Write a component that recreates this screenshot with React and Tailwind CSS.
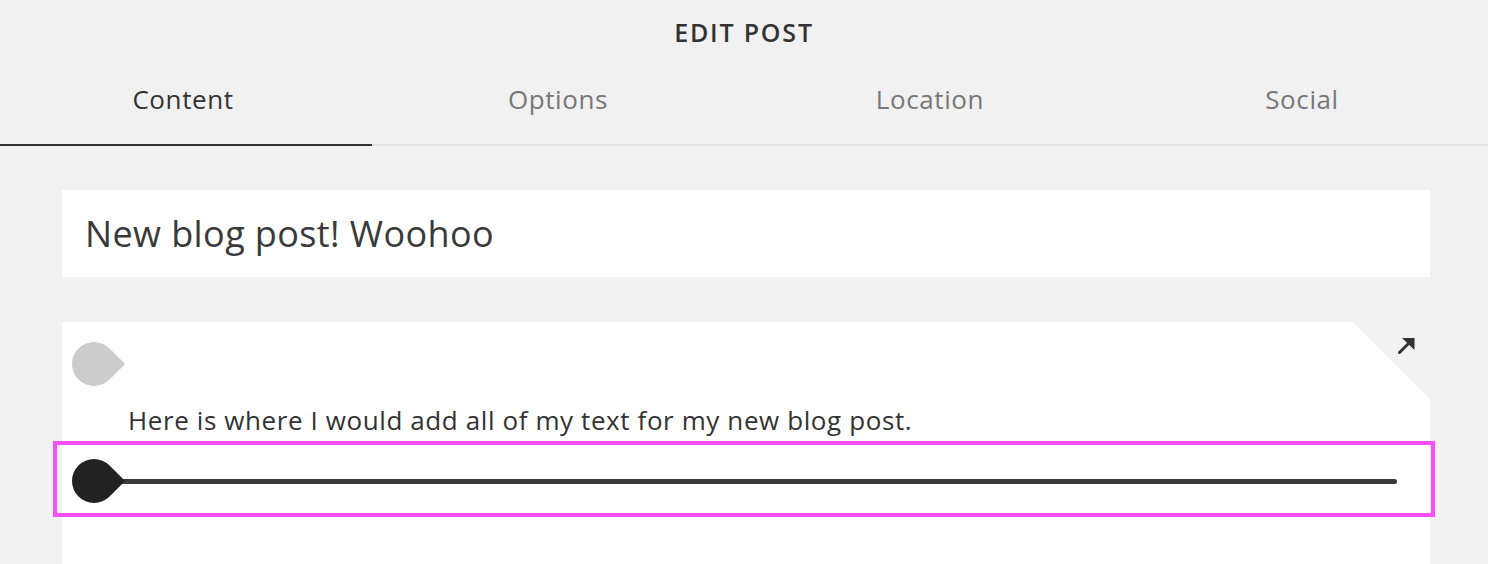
export default function App() {
  const tabs = ["Content", "Options", "Location", "Social"];
  return (
    <div
      className="h-[564px] w-[1488px] overflow-hidden bg-[#f1f1f1]"
      style={{ fontFamily: '"Open Sans", "Liberation Sans", sans-serif' }}
    >
      <div className="flex h-[66px] items-center justify-center text-[25px] font-semibold tracking-[1.8px] text-[#333]">
        EDIT POST
      </div>
      <div className="grid grid-cols-4">
        {tabs.map((t, i) => (
          <div
            key={t}
            className={
              i === 0
                ? "flex h-[80px] items-start justify-center border-b-2 border-[#333] pr-[6px] pt-[14px] text-[26px] tracking-[0.6px] text-[#333]"
                : "flex h-[80px] items-start justify-center border-b-2 border-[#e3e3e3] pt-[14px] text-[26px] tracking-[0.6px] text-[#777]"
            }
          >
            {t}
          </div>
        ))}
      </div>
      <div className="ml-[62px] mt-[44px] flex h-[87px] w-[1368px] items-center bg-white px-[23px] text-[36px] tracking-[0.4px] text-[#3a3a3a]">
        New blog post! Woohoo
      </div>
      <div className="relative ml-[62px] mt-[45px] w-[1368px]">
        <div className="h-[260px] bg-white pt-[20px] [clip-path:polygon(0_0,calc(100%_-_77px)_0,100%_77px,100%_100%,0_100%)]">
          <div className="pl-[10px]">
            <div className="h-[44px] w-[44px] rotate-45 rounded-full rounded-tr-none bg-[#cccccc]" />
          </div>
          <div className="mt-[19px] pl-[66px] text-[26px] leading-[30px] tracking-[0.6px] text-[#333]">
            Here is where I would add all of my text for my new blog post.
          </div>
          <div className="mt-[24px] flex items-center pl-[10px] pr-[33px]">
            <div className="h-[44px] w-[44px] shrink-0 rotate-45 rounded-full rounded-tr-none bg-[#222]" />
            <div className="-ml-[8px] h-[5px] flex-1 rounded-full bg-[#3a3a3a]" />
          </div>
        </div>
        <svg
          className="absolute right-[15px] top-[15px]"
          width="17"
          height="17"
          viewBox="0 0 17 17"
        >
          <line x1="1.5" y1="15.5" x2="11" y2="6" stroke="#333" strokeWidth="3" strokeLinecap="round" />
          <polygon points="4,1 16.5,1 16.5,13" fill="#333" />
        </svg>
        <div className="absolute left-[-9px] top-[119px] h-[76px] w-[1382px] border-4 border-[#f94ff7]" />
      </div>
    </div>
  );
}
